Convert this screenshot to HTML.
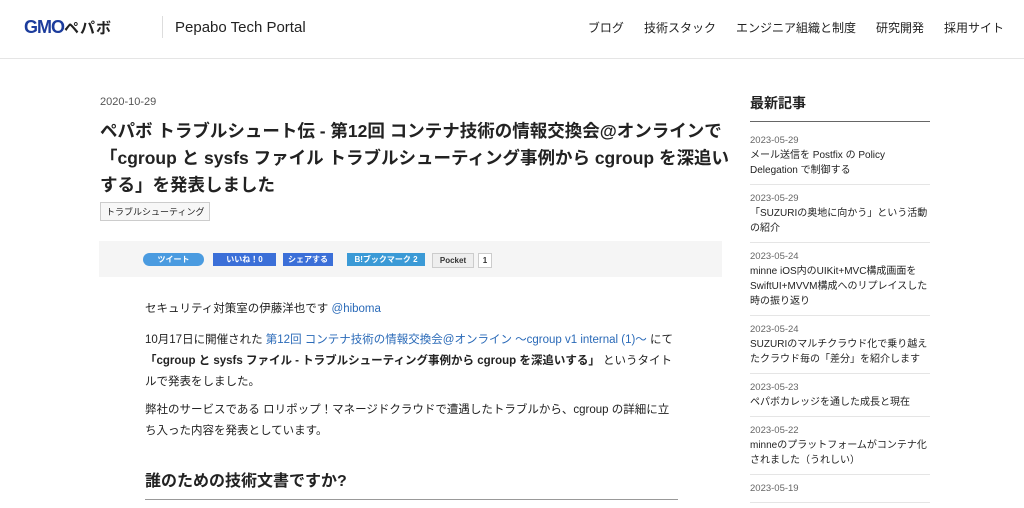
<!DOCTYPE html>
<html><head><meta charset="utf-8"><style>
body{margin:0;background:#fff;font-family:"Liberation Sans","Noto Sans CJK JP",sans-serif;color:#222;width:1024px;height:508px;overflow:hidden;position:relative}
.hdr{position:absolute;top:0;left:0;width:1024px;height:58px;border-bottom:1px solid #e5e5e5}
.logo{position:absolute;left:24px;top:17px;font-weight:bold;font-size:18px;color:#1c3c9c;letter-spacing:-1px}
.logo span{color:#222;font-weight:bold;font-size:15px;letter-spacing:1px}
.sep{position:absolute;left:162px;top:16px;width:1px;height:22px;background:#ddd}
.title{position:absolute;left:175px;top:19px;font-size:15px;color:#222}
.nav{position:absolute;right:20px;top:19px;font-size:12px;color:#222}
.nav a{margin-left:20px}
.a{position:absolute}
.date{left:100px;top:96px;font-size:11px;color:#555}
h1{position:absolute;left:100px;top:118px;margin:0;width:632px;font-size:17.5px;line-height:27px;font-weight:bold}
.tag{left:100px;top:202px;font-size:9px;border:1px solid #ccc;padding:2px 5px;background:#f7f7f7}
.share{left:99px;top:241px;width:623px;height:36px;background:#f5f5f5}
.b{position:absolute;top:12px;height:13px;font-size:8px;color:#fff;font-weight:bold;line-height:13px;text-align:center}
.p{left:145px;width:535px;font-size:11.5px;line-height:21px}
.p a{color:#2a6ab8}
h2{position:absolute;left:145px;top:467px;margin:0;font-size:16px;width:533px;border-bottom:1px solid #999;padding-bottom:8px}
.side{left:750px;top:93px;width:180px}
.side h3{margin:0 0 5px;font-size:14px;border-bottom:1px solid #666;padding-bottom:8px}
.it{border-bottom:1px solid #e5e5e5;padding:6px 0 6px;font-size:10px;line-height:15px}
.it .d{color:#666;font-size:9.5px}
</style></head><body>
<div class="hdr"><div class="logo">GMO<span>ペパボ</span></div><div class="sep"></div><div class="title">Pepabo Tech Portal</div>
<div class="nav"><a>ブログ</a><a>技術スタック</a><a>エンジニア組織と制度</a><a>研究開発</a><a>採用サイト</a></div></div>
<div class="a date">2020-10-29</div>
<h1>ペパボ トラブルシュート伝 - 第12回 コンテナ技術の情報交換会@オンラインで「cgroup と sysfs ファイル トラブルシューティング事例から cgroup を深追いする」を発表しました</h1>
<div class="a tag">トラブルシューティング</div>
<div class="a share">
<div class="b" style="left:44px;width:61px;background:#4a9be0;border-radius:7px">ツイート</div>
<div class="b" style="left:114px;width:63px;background:#3b6fd8">いいね！0</div>
<div class="b" style="left:184px;width:50px;background:#3b6fd8">シェアする</div>
<div class="b" style="left:248px;width:78px;background:#3b9ad6">B!ブックマーク 2</div>
<div class="b" style="left:333px;width:40px;background:#eee;color:#333;border:1px solid #ccc">Pocket</div>
<div class="b" style="left:379px;width:12px;background:#fff;color:#333;border:1px solid #ccc">1</div>
</div>
<div class="a p" style="top:299px">セキュリティ対策室の伊藤洋也です <a>@hiboma</a></div>
<div class="a p" style="top:330px;word-break:break-all">10月17日に開催された <a>第12回 コンテナ技術の情報交換会@オンライン 〜cgroup v1 internal (1)〜</a> にて <b>「cgroup と sysfs ファイル - トラブルシューティング事例から cgroup を深追いする」</b> というタイトルで発表をしました。</div>
<div class="a p" style="top:400px">弊社のサービスである ロリポップ！マネージドクラウドで遭遇したトラブルから、cgroup の詳細に立ち入った内容を発表としています。</div>
<h2>誰のための技術文書ですか?</h2>
<div class="a side"><h3>最新記事</h3>
<div class="it"><div class="d">2023-05-29</div>メール送信を Postfix の Policy Delegation で制御する</div>
<div class="it"><div class="d">2023-05-29</div>「SUZURIの奥地に向かう」という活動の紹介</div>
<div class="it"><div class="d">2023-05-24</div>minne iOS内のUIKit+MVC構成画面をSwiftUI+MVVM構成へのリプレイスした時の振り返り</div>
<div class="it"><div class="d">2023-05-24</div>SUZURIのマルチクラウド化で乗り越えたクラウド毎の「差分」を紹介します</div>
<div class="it"><div class="d">2023-05-23</div>ペパボカレッジを通した成長と現在</div>
<div class="it"><div class="d">2023-05-22</div>minneのプラットフォームがコンテナ化されました（うれしい）</div>
<div class="it"><div class="d">2023-05-19</div></div>
</div>
</body></html>
